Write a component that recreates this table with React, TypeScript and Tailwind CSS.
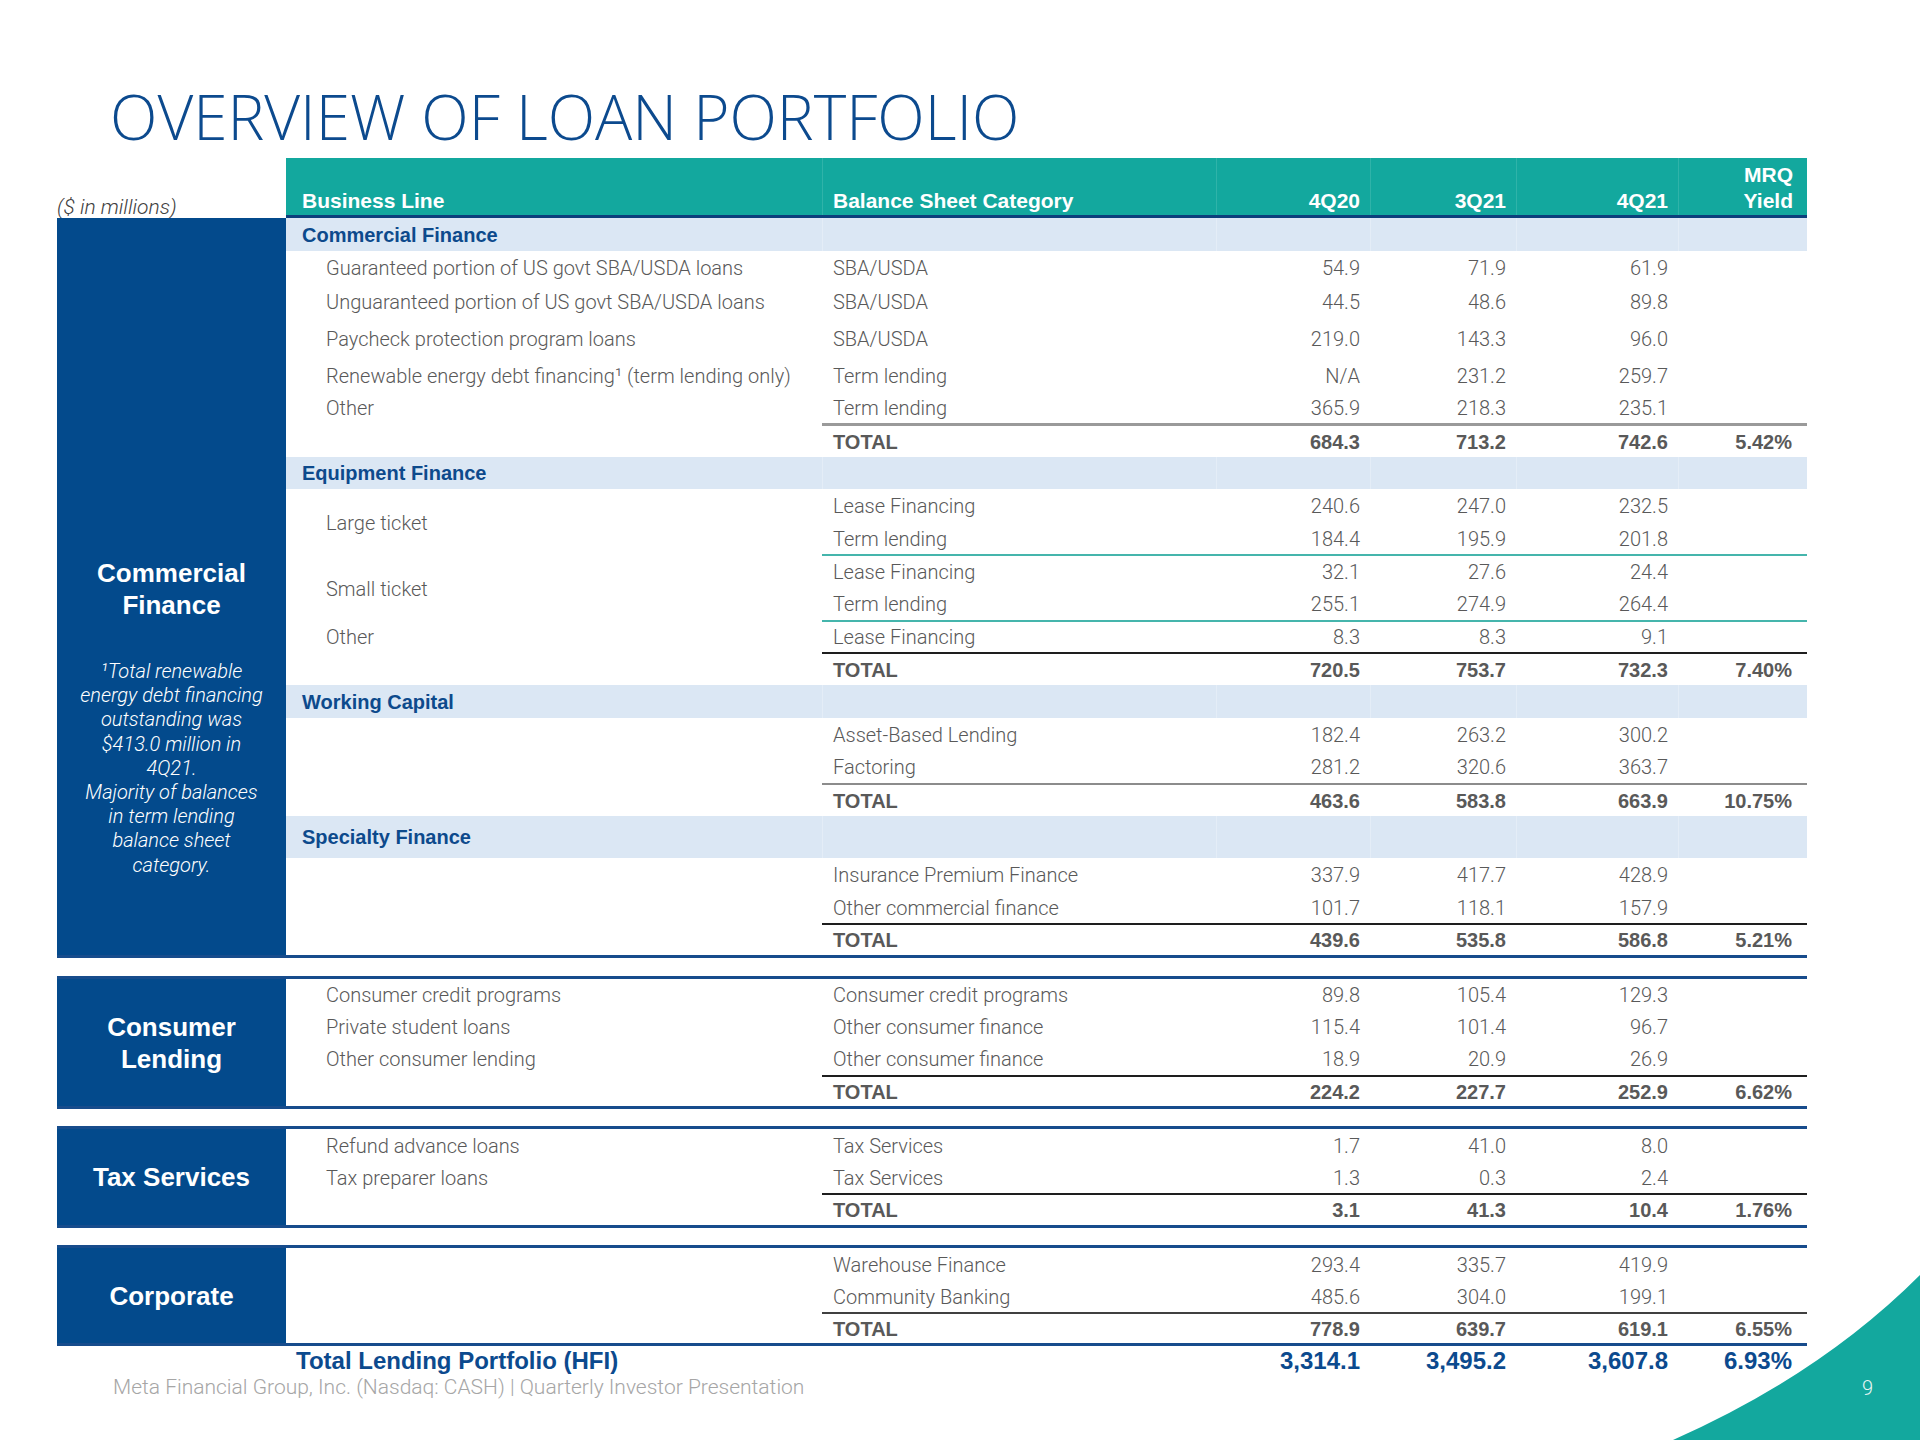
import React from "react";

const LIGHT = "font-['Roboto',sans-serif] font-light";
const BOLD = "font-['Liberation_Sans',Arial,sans-serif] font-bold";

type Vals = [string, string, string];

type RowProps = {
  label?: string;
  cat: string;
  v: Vals;
  y?: string;
  h: string;
  total?: boolean;
  inner?: boolean;
};

function Row({ label = "", cat, v, y = "", h, total, inner }: RowProps) {
  const f = total ? BOLD : LIGHT;
  return (
    <div className={`flex items-center text-[20px] leading-none text-[#595959] ${h}`}>
      {!inner && <div className={`w-[536px] pl-[40px] ${LIGHT}`}>{label}</div>}
      <div className={`w-[394px] pl-[11px] ${f}`}>{cat}</div>
      <div className={`w-[154px] pr-[10px] text-right ${f}`}>{v[0]}</div>
      <div className={`w-[146px] pr-[10px] text-right ${f}`}>{v[1]}</div>
      <div className={`w-[162px] pr-[10px] text-right ${f}`}>{v[2]}</div>
      <div className={`w-[129px] pr-[15px] text-right ${f}`}>{y}</div>
    </div>
  );
}

function Rule({ cls, inner }: { cls: string; inner?: boolean }) {
  return (
    <div className="flex">
      {!inner && <div className="w-[536px]" />}
      <div className={`w-[985px] ${cls}`} />
    </div>
  );
}

function Band({ title, h }: { title: string; h: string }) {
  return (
    <div className={`flex bg-[#dbe7f4] ${h}`}>
      <div className={`w-[536px] pl-[16px] flex items-center text-[20px] text-[#0d4a8c] ${BOLD}`}>{title}</div>
      <div className="w-[394px] border-l border-[#e4edf7]" />
      <div className="w-[154px] border-l border-[#e4edf7]" />
      <div className="w-[146px] border-l border-[#e4edf7]" />
      <div className="w-[162px] border-l border-[#e4edf7]" />
      <div className="w-[129px] border-l border-[#e4edf7]" />
    </div>
  );
}

function SideLabel({ children }: { children: React.ReactNode }) {
  return (
    <div className={`w-[229px] shrink-0 bg-[#034a8c] flex items-center justify-center text-center text-white text-[26px] leading-[32px] ${BOLD}`}>
      {children}
    </div>
  );
}

function Header() {
  const cell = `text-white text-[21px] leading-[26px] ${BOLD}`;
  return (
    <div className="flex">
      <div className={`w-[229px] flex items-end text-[21px] leading-[22px] text-[#404040] italic ${LIGHT}`}>($ in millions)</div>
      <div className="w-[1521px] h-[60px] bg-[#13a89e] border-b-[3px] border-[#0c3f7c] flex items-end">
        <div className={`w-[536px] h-full flex items-end pl-[16px] pb-[1px] ${cell}`}>Business Line</div>
        <div className={`w-[394px] h-full flex items-end pl-[10px] pb-[1px] border-l border-[#2fb3a9] ${cell}`}>Balance Sheet Category</div>
        <div className={`w-[154px] h-full flex items-end justify-end pr-[10px] pb-[1px] border-l border-[#2fb3a9] ${cell}`}>4Q20</div>
        <div className={`w-[146px] h-full flex items-end justify-end pr-[10px] pb-[1px] border-l border-[#2fb3a9] ${cell}`}>3Q21</div>
        <div className={`w-[162px] h-full flex items-end justify-end pr-[10px] pb-[1px] border-l border-[#2fb3a9] ${cell}`}>4Q21</div>
        <div className={`w-[129px] h-full flex items-end justify-end text-right pr-[14px] pb-[1px] border-l border-[#2fb3a9] ${cell}`}>
          MRQ
          <br />
          Yield
        </div>
      </div>
    </div>
  );
}

function CommercialBlock() {
  return (
    <div className="flex border-b-[3px] border-[#174c8c]">
      <div className="w-[229px] shrink-0 bg-[#034a8c] flex flex-col items-center pt-[339px] text-white text-center">
        <div className={`text-[26px] leading-[32px] ${BOLD}`}>
          Commercial
          <br />
          Finance
        </div>
        <div className={`mt-[38px] text-[20px] leading-[24.2px] italic ${LIGHT}`}>
          ¹Total renewable
          <br />
          energy debt financing
          <br />
          outstanding was
          <br />
          $413.0 million in
          <br />
          4Q21.
          <br />
          Majority of balances
          <br />
          in term lending
          <br />
          balance sheet
          <br />
          category.
        </div>
      </div>
      <div className="w-[1521px] flex flex-col">
        <Band title="Commercial Finance" h="h-[33px]" />
        <Row h="h-[34px]" label="Guaranteed portion of US govt SBA/USDA loans" cat="SBA/USDA" v={["54.9", "71.9", "61.9"]} />
        <Row h="h-[34px]" label="Unguaranteed portion of US govt SBA/USDA loans" cat="SBA/USDA" v={["44.5", "48.6", "89.8"]} />
        <Row h="h-[39px]" label="Paycheck protection program loans" cat="SBA/USDA" v={["219.0", "143.3", "96.0"]} />
        <Row h="h-[35px]" label="Renewable energy debt financing¹ (term lending only)" cat="Term lending" v={["N/A", "231.2", "259.7"]} />
        <Row h="h-[30px]" label="Other" cat="Term lending" v={["365.9", "218.3", "235.1"]} />
        <Rule cls="h-[3px] bg-[#9a9a9a]" />
        <Row h="h-[31px]" total cat="TOTAL" v={["684.3", "713.2", "742.6"]} y="5.42%" />

        <Band title="Equipment Finance" h="h-[32px]" />
        <div className="flex">
          <div className={`w-[536px] flex flex-col text-[20px] text-[#595959] ${LIGHT}`}>
            <div className="h-[67px] flex items-center pl-[40px]">Large ticket</div>
            <div className="h-[66px] flex items-center pl-[40px]">Small ticket</div>
            <div className="h-[30px] flex items-center pl-[40px]">Other</div>
          </div>
          <div className="w-[985px] flex flex-col">
            <Row inner h="h-[34px]" cat="Lease Financing" v={["240.6", "247.0", "232.5"]} />
            <Row inner h="h-[31px]" cat="Term lending" v={["184.4", "195.9", "201.8"]} />
            <Rule inner cls="h-[2px] bg-[#45b5ac]" />
            <Row inner h="h-[32px]" cat="Lease Financing" v={["32.1", "27.6", "24.4"]} />
            <Row inner h="h-[32px]" cat="Term lending" v={["255.1", "274.9", "264.4"]} />
            <Rule inner cls="h-[2px] bg-[#45b5ac]" />
            <Row inner h="h-[30px]" cat="Lease Financing" v={["8.3", "8.3", "9.1"]} />
          </div>
        </div>
        <Rule cls="h-[2px] bg-[#1e1e1e]" />
        <Row h="h-[31px]" total cat="TOTAL" v={["720.5", "753.7", "732.3"]} y="7.40%" />

        <Band title="Working Capital" h="h-[33px]" />
        <Row h="h-[33px]" cat="Asset-Based Lending" v={["182.4", "263.2", "300.2"]} />
        <Row h="h-[32px]" cat="Factoring" v={["281.2", "320.6", "363.7"]} />
        <Rule cls="h-[2px] bg-[#8c8c8c]" />
        <Row h="h-[31px]" total cat="TOTAL" v={["463.6", "583.8", "663.9"]} y="10.75%" />

        <Band title="Specialty Finance" h="h-[42px]" />
        <Row h="h-[34px]" cat="Insurance Premium Finance" v={["337.9", "417.7", "428.9"]} />
        <Row h="h-[31px]" cat="Other commercial finance" v={["101.7", "118.1", "157.9"]} />
        <Rule cls="h-[2px] bg-[#1e1e1e]" />
        <Row h="h-[30px]" total cat="TOTAL" v={["439.6", "535.8", "586.8"]} y="5.21%" />
      </div>
    </div>
  );
}

export default function App() {
  return (
    <div className="relative w-[1920px] h-[1440px] overflow-hidden bg-white">
      <div className="pt-[86px] pl-[110px]">
        <h1 className="font-['Open_Sans',sans-serif] font-light text-[62px] leading-[61px] text-[#0c4a8e]">
          OVERVIEW OF LOAN PORTFOLIO
        </h1>
      </div>

      <div className="mt-[11px] ml-[57px] w-[1750px] flex flex-col">
        <Header />
        <CommercialBlock />

        <div className="mt-[18px] flex border-y-[3px] border-[#174c8c]">
          <SideLabel>
            Consumer
            <br />
            Lending
          </SideLabel>
          <div className="w-[1521px] flex flex-col">
            <Row h="h-[32px]" label="Consumer credit programs" cat="Consumer credit programs" v={["89.8", "105.4", "129.3"]} />
            <Row h="h-[32px]" label="Private student loans" cat="Other consumer finance" v={["115.4", "101.4", "96.7"]} />
            <Row h="h-[32px]" label="Other consumer lending" cat="Other consumer finance" v={["18.9", "20.9", "26.9"]} />
            <Rule cls="h-[2px] bg-[#1e1e1e]" />
            <Row h="h-[29px]" total cat="TOTAL" v={["224.2", "227.7", "252.9"]} y="6.62%" />
          </div>
        </div>

        <div className="mt-[17px] flex border-y-[3px] border-[#174c8c]">
          <SideLabel>Tax Services</SideLabel>
          <div className="w-[1521px] flex flex-col">
            <Row h="h-[33px]" label="Refund advance loans" cat="Tax Services" v={["1.7", "41.0", "8.0"]} />
            <Row h="h-[31px]" label="Tax preparer loans" cat="Tax Services" v={["1.3", "0.3", "2.4"]} />
            <Rule cls="h-[2px] bg-[#1e1e1e]" />
            <Row h="h-[30px]" total cat="TOTAL" v={["3.1", "41.3", "10.4"]} y="1.76%" />
          </div>
        </div>

        <div className="mt-[17px] flex border-y-[3px] border-[#174c8c]">
          <SideLabel>Corporate</SideLabel>
          <div className="w-[1521px] flex flex-col">
            <Row h="h-[33px]" cat="Warehouse Finance" v={["293.4", "335.7", "419.9"]} />
            <Row h="h-[31px]" cat="Community Banking" v={["485.6", "304.0", "199.1"]} />
            <Rule cls="h-[2px] bg-[#404040]" />
            <Row h="h-[29px]" total cat="TOTAL" v={["778.9", "639.7", "619.1"]} y="6.55%" />
          </div>
        </div>

        <div className={`flex items-center h-[30px] text-[24px] leading-none text-[#0c4a8e] ${BOLD}`}>
          <div className="w-[229px]" />
          <div className="w-[930px] pl-[10px]">Total Lending Portfolio (HFI)</div>
          <div className="w-[154px] pr-[10px] text-right">3,314.1</div>
          <div className="w-[146px] pr-[10px] text-right">3,495.2</div>
          <div className="w-[162px] pr-[10px] text-right">3,607.8</div>
          <div className="w-[129px] pr-[15px] text-right">6.93%</div>
        </div>
      </div>

      <div className={`ml-[113px] text-[21px] leading-[22px] text-[#a6a6a6] ${LIGHT}`}>
        Meta Financial Group, Inc. (Nasdaq: CASH) | Quarterly Investor Presentation
      </div>

      <svg className="absolute left-0 top-0 pointer-events-none" width="1920" height="1440" viewBox="0 0 1920 1440">
        <path d="M1673 1440 Q1820 1375 1920 1275 L1920 1440 Z" fill="#13a89e" />
      </svg>
      <div className={`absolute left-[1862px] top-[1376px] text-[20px] leading-[24px] text-[#e8f6f4] ${LIGHT}`}>9</div>
    </div>
  );
}
